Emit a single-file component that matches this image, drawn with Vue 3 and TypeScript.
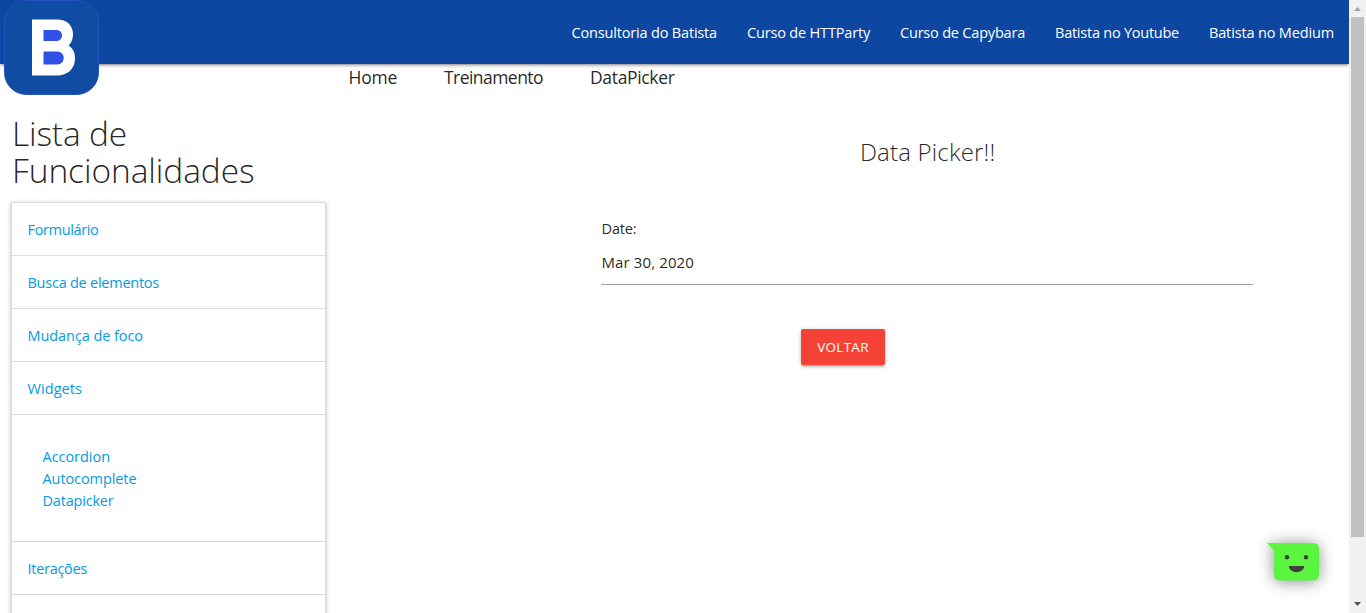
<script setup lang="ts">
import type { Directive } from 'vue'

interface Entry {
  label: string
  width: number
}

const navLinks: Entry[] = [
  { label: 'Consultoria do Batista', width: 145.5 },
  { label: 'Curso de HTTParty', width: 123 },
  { label: 'Curso de Capybara', width: 125 },
  { label: 'Batista no Youtube', width: 124 },
  { label: 'Batista no Medium', width: 125 },
]

const crumbs: Entry[] = [
  { label: 'Home', width: 48.5 },
  { label: 'Treinamento', width: 99 },
  { label: 'DataPicker', width: 84.5 },
]

const sections: Entry[] = [
  { label: 'Formulário', width: 71 },
  { label: 'Busca de elementos', width: 131.5 },
  { label: 'Mudança de foco', width: 115.5 },
  { label: 'Widgets', width: 54.5 },
]

const widgets: Entry[] = [
  { label: 'Accordion', width: 67.5 },
  { label: 'Autocomplete', width: 94 },
  { label: 'Datapicker', width: 71 },
]

// Tracks a label so that it takes up the given advance width.
const vFit: Directive<HTMLElement, number> = {
  mounted(el, { value }) {
    const natural = el.getBoundingClientRect().width
    const count = (el.textContent ?? '').length
    el.style.letterSpacing = `${(value - natural) / count}px`
  },
}
</script>

<template>
  <div class="window">
    <div class="page">
      <nav class="navbar">
        <a v-for="link in navLinks" :key="link.label" class="nav-link">
          <span v-fit="link.width" class="fit">{{ link.label }}</span>
        </a>
        <svg class="logo" viewBox="0 0 95 95" width="95" height="95">
          <rect x="0.5" y="0.5" width="94" height="94" rx="22" fill="#104ca2" stroke="#2450c8" />
          <rect x="34" y="26" width="26" height="42" fill="#3350e6" />
          <path
            fill="#fff"
            fill-rule="evenodd"
            d="M28 19.500H53C63 19.500 69 25.500 69 34C69 39.500 67 43.500 64.500 45.500C68.500 48 71 52 71 58C71 69 63.500 75.500 53 75.500H28ZM39.500 30V41H52C60 41 60 30 52 30ZM39.500 51.500V64.500H53C62 64.500 62 51.500 53 51.500Z"
          />
        </svg>
      </nav>

      <div class="columns">
        <aside class="sidebar">
          <h1 class="side-title">
            <span v-fit="115" class="fit">Lista de</span><br />
            <span v-fit="242.500" class="fit">Funcionalidades</span>
          </h1>
          <ul class="menu">
            <li v-for="item in sections" :key="item.label" class="menu-item">
              <a v-fit="item.width" class="fit">{{ item.label }}</a>
            </li>
            <li class="submenu">
              <div v-for="item in widgets" :key="item.label" class="sub-item">
                <a v-fit="item.width" class="fit">{{ item.label }}</a>
              </div>
            </li>
            <li class="menu-item"><a v-fit="59.500" class="fit">Iterações</a></li>
            <li class="menu-item"></li>
          </ul>
        </aside>

        <main class="content">
          <div class="crumbs">
            <a v-for="crumb in crumbs" :key="crumb.label" v-fit="crumb.width" class="fit">{{ crumb.label }}</a>
          </div>
          <h5 class="title"><span v-fit="135.500" class="fit">Data Picker!!</span></h5>
          <div class="field">
            <label class="label"><span v-fit="35" class="fit">Date:</span></label>
            <div class="input"><span v-fit="92.500" class="fit">Mar 30, 2020</span></div>
          </div>
          <button class="back" type="button"><span v-fit="51.500" class="fit">VOLTAR</span></button>
        </main>
      </div>
    </div>

    <div class="scrollbar">
      <svg class="arrow" viewBox="0 0 17 17" width="17" height="17"><path d="M5 11L8.500 7L12 11Z" fill="#a3a3a3" /></svg>
      <div class="thumb"></div>
      <svg class="arrow" viewBox="0 0 17 17" width="17" height="17"><path d="M5 6H12L8.500 10Z" fill="#505050" /></svg>
    </div>

    <svg class="chat" viewBox="0 0 52 38" width="52" height="38">
      <path d="M0 0H46Q52 0 52 6V31.500Q52 37.500 46 37.500H13Q7 37.500 7 31.500V7.500Z" fill="#5bf53f" />
      <circle cx="20" cy="14.300" r="2.200" fill="#3c3f3c" />
      <circle cx="39" cy="14.300" r="2.200" fill="#3c3f3c" />
      <path d="M21.800 23H37.200C36.500 31.200 22.500 31.200 21.800 23Z" fill="#3c3f3c" />
    </svg>
  </div>
</template>

<style>
html,
body {
  overflow: hidden;
}
</style>

<style scoped>
.window {
  position: relative;
  display: flex;
  width: 1366px;
  height: 613px;
  overflow: hidden;
  background: #fff;
  color: rgba(0, 0, 0, 0.87);
  font-family: 'Open Sans', 'Noto Sans', sans-serif;
  font-size: 14.5px;
  font-weight: 380;
}
.page {
  width: 1349px;
  overflow: hidden;
}
.fit {
  display: inline-block;
  white-space: nowrap;
}
.navbar {
  position: relative;
  display: flex;
  justify-content: flex-end;
  height: 64px;
  background: #0d47a1;
  box-shadow: 0 2px 2px 0 rgba(0, 0, 0, 0.14), 0 3px 1px -2px rgba(0, 0, 0, 0.12), 0 1px 5px 0 rgba(0, 0, 0, 0.2);
}
.nav-link {
  padding: 0 15px;
  line-height: 65px;
  color: #fff;
  font-weight: 430;
}
.logo {
  position: absolute;
  left: 4px;
  top: 0;
}
.columns {
  display: flex;
}
.sidebar {
  width: 337px;
  box-sizing: border-box;
  padding: 51px 11px 0;
}
.side-title {
  margin: 0 0 13px 1px;
  font-size: 33.5px;
  line-height: 37px;
  font-weight: 340;
}
.menu {
  margin: 0;
  padding: 0;
  list-style: none;
  border: 1px solid #ddd;
  box-shadow: 0 2px 2px 0 rgba(0, 0, 0, 0.14), 0 3px 1px -2px rgba(0, 0, 0, 0.12), 0 1px 5px 0 rgba(0, 0, 0, 0.2);
  color: #039be5;
}
.menu-item {
  height: 52px;
  padding-left: 15.5px;
  border-bottom: 1px solid #ddd;
  line-height: 53px;
}
.submenu {
  height: 124px;
  box-sizing: content-box;
  display: flex;
  flex-direction: column;
  justify-content: center;
  padding: 2px 0 0 30.5px;
  border-bottom: 1px solid #ddd;
}
.sub-item {
  height: 22px;
  line-height: 22px;
}
.content {
  display: flex;
  flex-direction: column;
  flex: 1;
}
.crumbs {
  display: flex;
  gap: 47px;
  height: 28px;
  padding-left: 11.5px;
  font-size: 17.5px;
  line-height: 26px;
}
.title {
  margin: 46px 0 0 523px;
  font-size: 24px;
  line-height: 28px;
  font-weight: 340;
}
.field {
  width: 652px;
  margin: 51px 0 0 264px;
}
.label {
  display: block;
  height: 24px;
  padding-left: 0.5px;
  line-height: 24px;
}
.input {
  height: 43px;
  padding-left: 0.5px;
  box-sizing: content-box;
  width: 651.5px;
  border-bottom: 1px solid #9e9e9e;
  font-size: 15px;
  line-height: 42px;
}
.back {
  width: 84px;
  height: 36px;
  margin: 44px 0 0 464px;
  padding: 0;
  border: 0;
  border-radius: 2px;
  background: #f44336;
  color: #fff;
  font: 400 13.500px/36px 'Open Sans', 'Noto Sans', sans-serif;
  box-shadow: 0 2px 2px 0 rgba(0, 0, 0, 0.14), 0 3px 1px -2px rgba(0, 0, 0, 0.12), 0 1px 5px 0 rgba(0, 0, 0, 0.2);
}
.scrollbar {
  display: flex;
  flex-direction: column;
  width: 17px;
  background: #f1f1f1;
}
.arrow {
  display: block;
  flex: none;
}
.thumb {
  width: 13px;
  height: 520px;
  margin: 0 2px auto;
  background: #c1c1c1;
}
.chat {
  position: absolute;
  left: 1267px;
  top: 543px;
  overflow: visible;
  filter: drop-shadow(0 1px 8px rgba(0, 0, 0, 0.45));
}
</style>
